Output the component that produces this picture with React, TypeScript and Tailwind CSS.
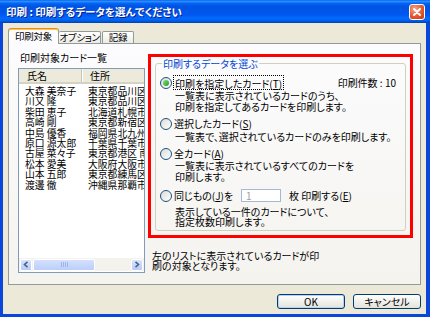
import React from "react";

const rows: [string, string][] = [
  ["大森 美奈子", "東京都品川区東五反田"],
  ["川又 隆", "東京都品川区大崎"],
  ["柴田 恵子", "北海道札幌市中央区"],
  ["高崎 剛", "東京都新宿区西新宿"],
  ["中島 優香", "福岡県北九州市"],
  ["原口 源太郎", "千葉県千葉市中央区"],
  ["古屋 菜々子", "東京都港区 南青山"],
  ["松本 愛美", "大阪府大阪市北区"],
  ["山本 五郎", "東京都練馬区豊玉"],
  ["渡邊 徹", "沖縄県那覇市久茂地"],
];

function Radio({ checked }: { checked?: boolean }) {
  return (
    <span className="relative w-[12px] h-[12px] shrink-0 rounded-full border border-[#1c5180] bg-gradient-to-br from-[#dcdcd7] to-white flex items-center justify-center">
      {checked && <span className="w-[6px] h-[6px] rounded-full bg-gradient-to-br from-[#7be37a] to-[#1f9a1f]" />}
    </span>
  );
}

function Key({ k }: { k: string }) {
  return (
    <>
      (<span className="underline underline-offset-1">{k}</span>)
    </>
  );
}

function ScrollArrow({ dir }: { dir: "l" | "r" }) {
  return (
    <span className="w-[12px] h-[12px] shrink-0 rounded-[2px] border border-white bg-gradient-to-b from-[#d8e3fd] to-[#b6cbf9] flex items-center justify-center">
      <svg width="6" height="7" viewBox="0 0 6 7">
        {dir === "l" ? (
          <path d="M4.5 0.8 L1.5 3.5 L4.5 6.2" fill="none" stroke="#4d6185" strokeWidth="1.6" />
        ) : (
          <path d="M1.5 0.8 L4.5 3.5 L1.5 6.2" fill="none" stroke="#4d6185" strokeWidth="1.6" />
        )}
      </svg>
    </span>
  );
}

function Button({ label, def }: { label: string; def?: boolean }) {
  return (
    <button
      className={`w-[68px] h-[15px] rounded-[3px] border border-[#003c74] bg-gradient-to-b from-white to-[#e3e2da] flex items-center justify-center text-[10px] leading-none ${
        def ? "shadow-[inset_0_0_0_1px_#b9d0f5]" : ""
      }`}
    >
      {label}
    </button>
  );
}

export default function App() {
  return (
    <div className="w-[430px] h-[317px] bg-[#0a46dc] flex flex-col overflow-hidden text-black text-[10px] leading-[11px] font-['Noto_Sans_CJK_JP',sans-serif] [font-feature-settings:'palt']">
      {/* title bar */}
      <div className="h-[23px] shrink-0 flex items-center justify-between pl-[6px] pr-[5px] bg-[linear-gradient(to_bottom,#0058ee_0%,#3593ff_5%,#127dff_10%,#0262ee_16%,#0054e3_26%,#0055eb_56%,#005bf5_68%,#026afe_78%,#0062ef_88%,#0052d6_94%,#0040ab_100%)]">
        <span className="text-white font-bold text-[10.5px] [text-shadow:1px_1px_0_#0a1e8c]">印刷 : 印刷するデータを選んでください</span>
        <span className="w-[16px] h-[16px] rounded-[3px] border border-white bg-[radial-gradient(circle_at_35%_30%,#f6a68a,#e2582f_55%,#c43a15)] flex items-center justify-center">
          <svg width="10" height="10" viewBox="0 0 10 10">
            <path d="M2 2 L8 8 M8 2 L2 8" stroke="white" strokeWidth="1.9" strokeLinecap="round" />
          </svg>
        </span>
      </div>

      {/* body */}
      <div className="flex-1 ml-[3px] mr-[4px] mb-[4px] bg-[#ece9d8] flex flex-col px-[5px] pt-[5px] pb-[5px]">
        {/* tabs */}
        <div className="flex items-end h-[15px] relative z-10 text-[9.5px] tracking-[-0.3px]">
          <div className="w-[51px] h-[16px] -mb-px border border-[#919b9c] border-b-0 border-t-[#e68b2c] rounded-t-[3px] bg-[#fcfcfe] shadow-[inset_0_1px_0_#ffc73c] flex items-center justify-center">
            印刷対象
          </div>
          <div className="w-[42px] h-[12px] border border-[#919b9c] border-b-0 border-l-0 rounded-t-[2px] bg-gradient-to-b from-white to-[#ecebe5] flex items-center justify-center whitespace-nowrap">
            オプション
          </div>
          <div className="w-[32px] h-[12px] ml-[1px] border border-[#919b9c] border-b-0 rounded-t-[2px] bg-gradient-to-b from-white to-[#ecebe5] flex items-center justify-center">
            記録
          </div>
        </div>

        {/* tab panel */}
        <div className="h-[242px] border border-[#919b9c] bg-gradient-to-b from-[#fcfcfe] to-[#f4f3ee] flex items-start pl-[9px]">
          {/* left column */}
          <div className="w-[127px] pt-[8px] flex flex-col">
            <div className="pl-[2px]">印刷対象カード一覧</div>
            <div className="mt-[5px] h-[205px] border border-[#7f9db9] bg-white flex flex-col overflow-hidden">
              <div className="h-[15px] shrink-0 flex bg-[#ebeadb] border-b-2 border-[#d6d2c2]">
                <div className="w-[63px] pl-[8px] flex items-center border-r border-[#c7c5b2] shadow-[1px_0_0_white]">氏名</div>
                <div className="flex-1 pl-[8px] flex items-center">住所</div>
              </div>
              <div className="flex-1 pt-[2px] leading-[10.4px] text-[9.8px]">
                {rows.map(([n, a]) => (
                  <div key={n} className="flex whitespace-nowrap">
                    <div className="w-[63px] pl-[6px] overflow-hidden">{n}</div>
                    <div className="flex-1 pl-[6px] overflow-hidden">{a}</div>
                  </div>
                ))}
              </div>
              <div className="h-[13px] mb-[1px] shrink-0 flex items-center gap-[1px] px-[1px] bg-[#f3f2ec]">
                <ScrollArrow dir="l" />
                <div className="flex-1 h-[12px] flex">
                  <div className="w-[62px] h-full rounded-[2px] border border-white bg-gradient-to-b from-[#d3e0fd] to-[#bccffa] flex items-center justify-center gap-[1px]">
                    {[0, 1, 2, 3].map((i) => (
                      <span key={i} className="w-[1px] h-[5px] bg-[#9db5ee]" />
                    ))}
                  </div>
                </div>
                <ScrollArrow dir="r" />
              </div>
            </div>
          </div>

          {/* right column */}
          <div className="ml-[3px] pt-[10px] flex flex-col">
            <div className="w-[265px] h-[184px] border-[3px] border-[#ff0000] pt-[1px] px-[4px] pb-[4px] flex">
              <fieldset className="flex-1 border border-[#d0d0bf] rounded-[3px] pl-[4px] pr-[9px] pb-[2px]">
                <legend className="ml-[2px] px-[1px] text-[#0046d5]">印刷するデータを選ぶ</legend>
                <div className="mt-[7px] flex items-center h-[13px]">
                  <Radio checked />
                  <span className="ml-[1px] px-[1px] h-[15px] pt-[1px] flex items-center border border-dotted border-black">
                    印刷を指定したカード<Key k="T" />
                  </span>
                  <span className="ml-auto">印刷件数 : 10</span>
                </div>
                <div className="pl-[15px] mt-[1px]">
                  一覧表に表示されているカードのうち、<br />
                  印刷を指定してあるカードを印刷します。
                </div>
                <div className="mt-[5px] flex items-center h-[13px]">
                  <Radio />
                  <span className="ml-[2px]">
                    選択したカード<Key k="S" />
                  </span>
                </div>
                <div className="pl-[15px] mt-[1px]">一覧表で、選択されているカードのみを印刷します。</div>
                <div className="mt-[5px] flex items-center h-[13px]">
                  <Radio />
                  <span className="ml-[2px]">
                    全カード<Key k="A" />
                  </span>
                </div>
                <div className="pl-[15px]">
                  一覧表に表示されているすべてのカードを<br />
                  印刷します。
                </div>
                <div className="mt-[7px] flex items-center h-[13px]">
                  <Radio />
                  <span className="ml-[2px] w-[67px]">
                    同じもの<Key k="J" />を
                  </span>
                  <span className="w-[40px] h-[13px] border border-[#a5b8d6] bg-white text-[#a0a0a0] pl-[4px] flex items-center">1</span>
                  <span className="ml-[8px]">
                    枚 印刷する<Key k="E" />
                  </span>
                </div>
                <div className="pl-[15px] mt-[5px] leading-[10px]">
                  表示している一件のカードについて、<br />
                  指定枚数印刷します。
                </div>
              </fieldset>
            </div>
            <div className="mt-[13px] pl-[4px] leading-[10px]">
              左のリストに表示されているカードが印<br />
              刷の対象となります。
            </div>
          </div>
        </div>

        {/* buttons */}
        <div className="mt-[9px] flex justify-end gap-[8px]">
          <Button label="OK" def />
          <Button label="キャンセル" />
        </div>
      </div>
    </div>
  );
}
